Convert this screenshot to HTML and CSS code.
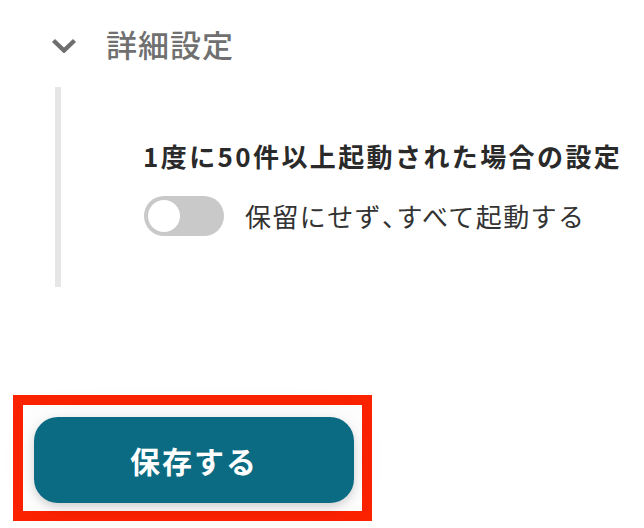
FILE: index.html
```html
<!DOCTYPE html>
<html lang="ja">
<head>
<meta charset="utf-8">
<link rel="stylesheet" href="styles.css">
</head>
<body>
<div class="page">
  <div class="acc-header">
    <svg class="chev" width="26" height="15" viewBox="0 0 26 15"><path d="M2.5 2.5 L13 12.5 L23.5 2.5" fill="none" stroke="#6e6e6e" stroke-width="4.4" stroke-linecap="butt" stroke-linejoin="miter"/></svg>
    <span class="acc-title">詳細設定</span>
  </div>
  <div class="acc-body">
    <div class="setting-title">1度に50件以上起動された場合の設定</div>
    <label class="toggle-row">
      <span class="toggle"><span class="knob"></span></span>
      <span class="toggle-label">保留にせず<span class="comma">、</span>すべて起動する</span>
    </label>
  </div>
  <div class="save-wrap">
    <button class="save-btn">保存する</button>
  </div>
</div>
</body>
</html>
```
FILE: styles.css
```css
html, body {
  margin: 0;
  padding: 0;
  background: #ffffff;
}
body {
  font-family: "Noto Sans CJK JP", "Noto Sans", sans-serif;
  color: #333333;
}
.page {
  width: 644px;
  height: 528px;
  overflow: hidden;
  padding-top: 21px;
  box-sizing: border-box;
}
.acc-header {
  display: flex;
  align-items: center;
  height: 46px;
  padding-left: 51px;
  gap: 29px;
}
.chev {
  display: block;
  margin-top: 2px;
}
.acc-title {
  font-size: 31px;
  font-weight: 500;
  color: #707070;
  letter-spacing: 1px;
  line-height: 46px;
}
.acc-body {
  margin-top: 20px;
  margin-left: 55px;
  height: 200px;
  box-sizing: border-box;
  border-left: 6px solid #e6e6e6;
  padding-left: 82px;
  padding-top: 51px;
}
.setting-title {
  font-size: 26px;
  font-weight: 700;
  line-height: 36px;
  color: #2a2a2a;
  letter-spacing: 2.4px;
  white-space: nowrap;
}
.toggle-row {
  display: flex;
  align-items: center;
  gap: 21px;
  margin-top: 22px;
  margin-left: 1px;
}
.toggle {
  width: 80px;
  height: 40px;
  border-radius: 20px;
  background: #c9c9c9;
  display: flex;
  align-items: center;
  padding-left: 4px;
  box-sizing: border-box;
  flex: none;
}
.knob {
  width: 32px;
  height: 32px;
  border-radius: 50%;
  background: #ffffff;
}
.toggle-label {
  font-size: 26px;
  font-weight: 400;
  color: #333333;
  line-height: 36px;
  white-space: nowrap;
  letter-spacing: 1.4px;
}
.comma {
  font-feature-settings: "halt" 1;
}
.save-wrap {
  margin-top: 108px;
  margin-left: 13px;
  width: 359px;
  height: 126px;
  box-sizing: border-box;
  border: 10px solid #fb2200;
  padding: 12px 8px 8px 11px;
}
.save-btn {
  display: block;
  width: 320px;
  height: 86px;
  border: none;
  border-radius: 24px;
  background: #0b6b82;
  color: #ffffff;
  font-family: "Noto Sans CJK JP", "Noto Sans", sans-serif;
  font-size: 30px;
  font-weight: 700;
  letter-spacing: 2px;
  box-shadow: 0 4px 10px rgba(0, 0, 0, 0.16), 0 0 40px rgba(0, 0, 0, 0.06);
  cursor: pointer;
  padding: 0;
}
```
